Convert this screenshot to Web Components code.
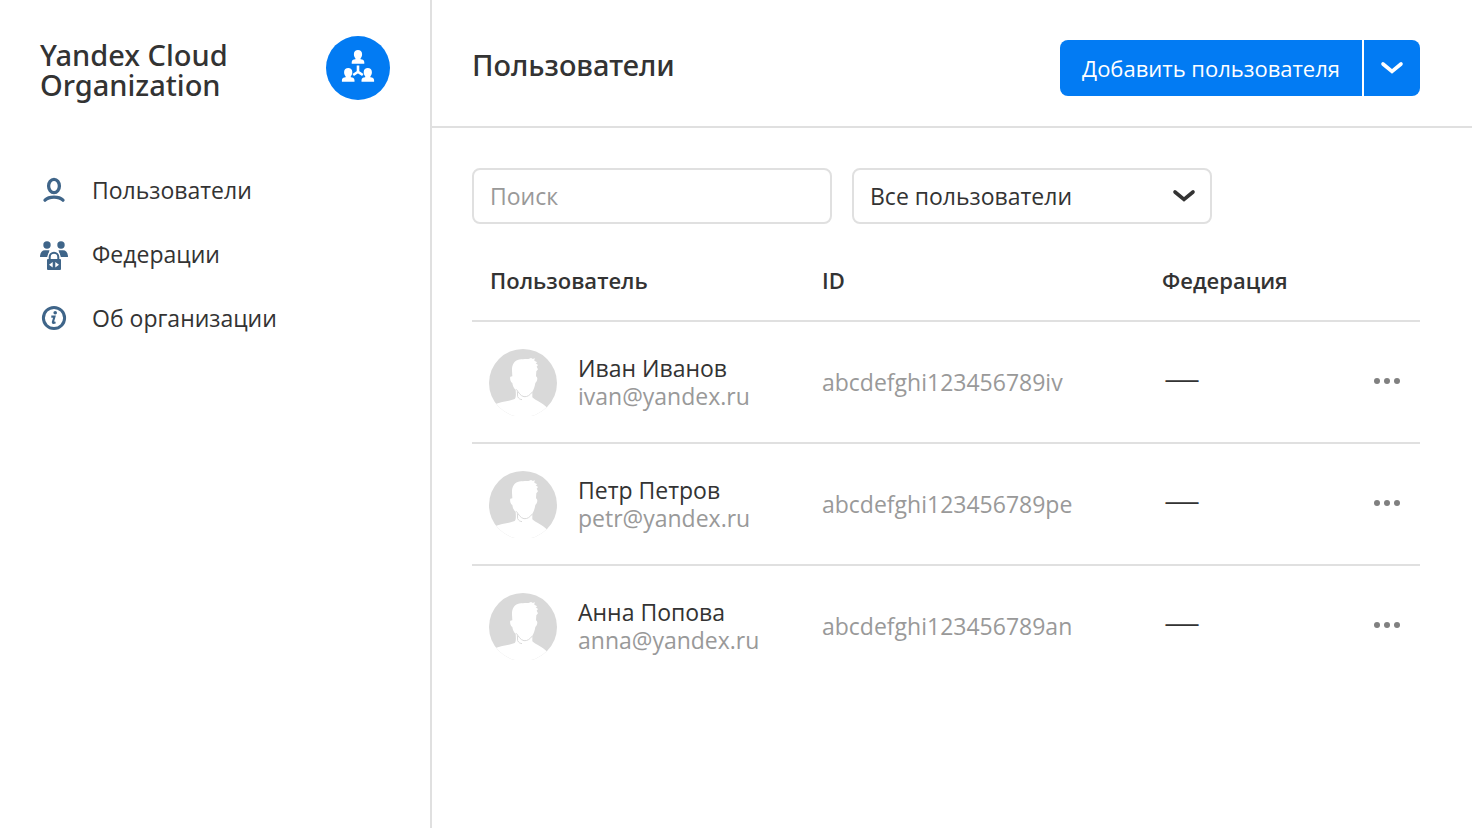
<!DOCTYPE html>
<html lang="ru">
<head>
<meta charset="utf-8">
<meta name="viewport" content="width=device-width, initial-scale=1">
<title>Yandex Cloud Organization</title>
<style>
  body {
    margin: 0;
    background: #fff;
    color: #333;
    font: 400 23px/28px "Open Sans", "Noto Sans", sans-serif;
    --heading: 500 29px/30px "Noto Sans", "Open Sans", sans-serif;
    --line: #e0e0e0;
    --muted: #999;
    --accent: #027bf3;
  }
</style>
</head>
<body>
<org-app>
  <org-sidebar slot="sidebar">
    <nav-item icon="user" href="#users">Пользователи</nav-item>
    <nav-item icon="federation" href="#federations">Федерации</nav-item>
    <nav-item icon="info" href="#about">Об организации</nav-item>
  </org-sidebar>
  <page-header slot="header">
    Пользователи
    <split-button slot="action">Добавить пользователя</split-button>
  </page-header>
  <user-filters></user-filters>
  <user-table></user-table>
</org-app>

<script>
const define = (name, html, setup) => {
  const template = document.createElement('template');
  template.innerHTML = html;
  customElements.define(name, class extends HTMLElement {
    constructor() {
      super();
      this.attachShadow({ mode: 'open' }).append(template.content.cloneNode(true));
    }
    connectedCallback() {
      if (setup) setup(this, this.shadowRoot);
    }
  });
};

define('org-app', `
  <style>
    :host { display: grid; grid-template-columns: 432px minmax(0, 1fr); min-height: 100vh; }
    aside { border-right: 2px solid var(--line); }
    .content { padding: 40px 52px 40px 40px; }
  </style>
  <aside><slot name="sidebar"></slot></aside>
  <div>
    <slot name="header"></slot>
    <main class="content"><slot></slot></main>
  </div>`);

define('org-sidebar', `
  <style>
    :host { display: block; padding: 36px 40px; }
    header { display: flex; justify-content: space-between; align-items: center; }
    h2 { margin: 0; font: var(--heading); padding-top: 4px; }
    svg { display: block; width: 64px; height: 64px; }
    nav { display: flex; flex-direction: column; gap: 28px; margin-top: 72px; }
  </style>
  <header>
    <h2>Yandex Cloud<br>Organization</h2>
    <svg viewBox="0 0 64 64" aria-hidden="true">
      <defs>
        <path id="person" d="M2.200 4C2.200 1.500 4 0 6.300 0s4.100 1.500 4.100 4c0 2-.6 3.400-1.500 4.300v1c2.200.3 3.700 1 3.700 3v1.400H0v-1.400c0-2 1.500-2.700 3.700-3v-1C2.800 7.400 2.200 6 2.200 4z"/>
      </defs>
      <circle cx="32" cy="32" r="32" fill="#027bf3"/>
      <g fill="#fff">
        <use href="#person" x="25.700" y="14"/>
        <use href="#person" x="15.900" y="32"/>
        <use href="#person" x="35.500" y="32"/>
      </g>
      <path d="M32 29.500v6.300l-4.800 3.200M32 35.800l4.800 3.200" fill="none" stroke="#fff" stroke-width="2.600"/>
    </svg>
  </header>
  <nav><slot></slot></nav>`);

const navIcons = {
  user: `<g fill="none" stroke="#3f6589" stroke-width="3.300" stroke-linecap="round">
      <ellipse cx="14" cy="11" rx="5.400" ry="6.700"/>
      <path d="M5 25.200C9 21.200 19 21.200 23 25.200"/></g>`,
  federation: `<g fill="#3f6589">
      <circle cx="7" cy="6" r="3.700"/><circle cx="21" cy="6" r="3.700"/>
      <path d="M0 18c0-4.500 2-6.800 5-6.800h4.500L7.500 18zM28 18c0-4.500-2-6.800-5-6.800h-4.500L20.500 18z"/>
      <path d="M9.700 20v-2a4.300 4.300 0 0 1 8.600 0v2" fill="#fff" stroke="#fff" stroke-width="4.500"/>
      <path d="M9.700 20v-2a4.300 4.300 0 0 1 8.600 0v2" fill="none" stroke="#3f6589" stroke-width="2"/>
      <rect x="7" y="20" width="14" height="11" rx="1"/>
      <path d="M12.700 23v5.500L9 25.750zM15.300 23v5.500l3.700-2.750z" fill="#fff"/></g>`,
  info: `<circle cx="14" cy="15" r="10.600" fill="none" stroke="#3f6589" stroke-width="3"/>
      <circle cx="15.200" cy="9.700" r="1.800" fill="#3f6589"/>
      <path d="M11.300 13.600h3.200L12.900 19q-.3 1.700 2.600.3" fill="none" stroke="#3f6589" stroke-width="2.100"/>`
};

define('nav-item', `
  <style>
    :host { display: block; }
    a { display: flex; align-items: center; gap: 24px; line-height: 36px; color: inherit; text-decoration: none; }
    svg { display: block; width: 28px; height: 32px; flex: none; }
  </style>
  <a><svg viewBox="0 -1 28 32" aria-hidden="true"></svg><span><slot></slot></span></a>`,
  (host, root) => {
    root.querySelector('a').href = host.getAttribute('href');
    root.querySelector('svg').innerHTML = navIcons[host.getAttribute('icon')];
  });

define('page-header', `
  <style>
    :host { display: flex; justify-content: space-between; align-items: center; height: 126px;
      padding: 0 52px 0 40px; border-bottom: 2px solid var(--line); }
    h1 { margin: 0; padding-top: 4px; font: var(--heading); }
    slot[name] { display: flex; }
  </style>
  <h1><slot></slot></h1>
  <slot name="action"></slot>`);

define('split-button', `
  <style>
    :host { display: flex; gap: 2px; margin-top: 10px; }
    button { height: 56px; margin: 0; padding: 0 22px; border: 0; background: var(--accent); color: #fff;
      font: inherit; cursor: pointer; }
    .main { border-radius: 8px 0 0 8px; font-size: 22px; }
    .more { width: 56px; padding: 0; border-radius: 0 8px 8px 0; display: grid; place-items: center; }
    svg { width: 24px; height: 16px; }
  </style>
  <button class="main" type="button"><slot></slot></button>
  <button class="more" type="button" aria-label="Другие действия">
    <svg viewBox="0 0 24 16" aria-hidden="true"><path d="M3 4l9 7.500L21 4" fill="none" stroke="#fff" stroke-width="3.600" stroke-linecap="round"/></svg>
  </button>`);

define('user-filters', `
  <style>
    :host { display: flex; gap: 20px; }
    .field { flex: 0 1 360px; display: grid; align-items: center; }
    input, select { grid-area: 1 / 1; box-sizing: border-box; width: 100%; height: 56px; margin: 0; padding: 0 16px;
      border: 2px solid var(--line); border-radius: 8px; background: #fff; color: inherit; font: inherit; appearance: none; }
    input::placeholder { color: var(--muted); opacity: 1; }
    svg { grid-area: 1 / 1; justify-self: end; width: 24px; height: 16px; margin-right: 16px; pointer-events: none; z-index: 1; }
  </style>
  <div class="field"><input type="text" placeholder="Поиск" aria-label="Поиск"></div>
  <div class="field">
    <select aria-label="Фильтр"><option>Все пользователи</option></select>
    <svg viewBox="0 0 24 16" aria-hidden="true"><path d="M3 4l9 7.500L21 4" fill="none" stroke="#333" stroke-width="3.600" stroke-linecap="round"/></svg>
  </div>`);

define('user-avatar', `
  <style>
    :host { display: block; flex: none; width: 68px; height: 68px; }
    svg { display: block; width: 100%; height: 100%; }
  </style>
  <svg viewBox="27 24 204 204" aria-hidden="true">
    <defs><clipPath id="disc"><circle cx="129" cy="129" r="102"/></clipPath></defs>
    <g clip-path="url(#disc)">
      <rect x="27" y="27" width="204" height="204" fill="#d9d9d9"/>
      <path fill="#fff" d="M40 194C65 184 88 184 104 177C108 174 108 165 107 149C101 145 98 137 97 129C91 127 89 113 91 110L97 109L96 92C95 76 102 64 113 60C125 55 145 60 153 54L159 57L164 54L163 62L172 67L167 70L174 75L170 80L174 88L169 94L168 109C174 112 173 123 166 129C165 138 161 149 157 155L157 172C168 183 188 188 204 206L190 240H50Z"/>
      <path fill="none" stroke="#d9d9d9" stroke-width="3" d="M109 148C116 156 120 168 132 170C142 171 149 166 157 156M112 154L113 170C116 176 120 178 126 179"/>
    </g>
  </svg>`);

define('user-cell', `
  <style>
    :host { display: flex; align-items: center; gap: 21px; padding-left: 17px; }
    .email { color: var(--muted); }
  </style>
  <user-avatar></user-avatar>
  <div><div><slot></slot></div><div class="email"><slot name="email"></slot></div></div>`);

define('row-menu', `
  <style>
    :host { display: block; }
    button { display: grid; place-items: center; width: 100%; height: 40px; margin: 0; padding: 0; border: 0; background: none; cursor: pointer; }
    svg { width: 26px; height: 8px; }
  </style>
  <button type="button" aria-label="Действия">
    <svg viewBox="0 0 26 8" fill="#808080" aria-hidden="true"><circle cx="3" cy="3" r="3"/><circle cx="13" cy="3" r="3"/><circle cx="23" cy="3" r="3"/></svg>
  </button>`);

const users = [
  ['Иван Иванов', 'ivan@yandex.ru', 'abcdefghi123456789iv'],
  ['Петр Петров', 'petr@yandex.ru', 'abcdefghi123456789pe'],
  ['Анна Попова', 'anna@yandex.ru', 'abcdefghi123456789an']
];

define('user-table', `
  <style>
    :host { display: block; margin-top: 16px; }
    table { width: 100%; border-collapse: separate; border-spacing: 0; table-layout: fixed; }
    .user { width: 350px; }
    .id { width: 340px; }
    .menu { width: 66px; }
    th, td { padding: 0; text-align: left; border-bottom: 2px solid var(--line); }
    th { height: 80px; font-size: 22px; font-weight: 600; }
    th:first-child { padding-left: 18px; }
    tbody td { height: 120px; }
    tbody tr:last-child td { border-bottom: 0; }
    .code { color: var(--muted); }
    .dash { box-sizing: border-box; padding: 0 0 8px 2px; font-size: 36px; font-weight: 300; }
    tbody .dash { height: 122px; }
    tbody tr:last-child .dash { height: 120px; }
  </style>
  <table>
    <colgroup><col class="user"><col class="id"><col><col class="menu"></colgroup>
    <thead><tr><th scope="col">Пользователь</th><th scope="col">ID</th><th scope="col">Федерация</th><td></td></tr></thead>
    <tbody></tbody>
  </table>`,
  (host, root) => {
    root.querySelector('tbody').innerHTML = users.map(([name, email, id]) => `
      <tr>
        <td><user-cell>${name}<span slot="email">${email}</span></user-cell></td>
        <td class="code">${id}</td>
        <td class="dash">—</td>
        <td><row-menu></row-menu></td>
      </tr>`).join('');
  });
</script>
</body>
</html>
